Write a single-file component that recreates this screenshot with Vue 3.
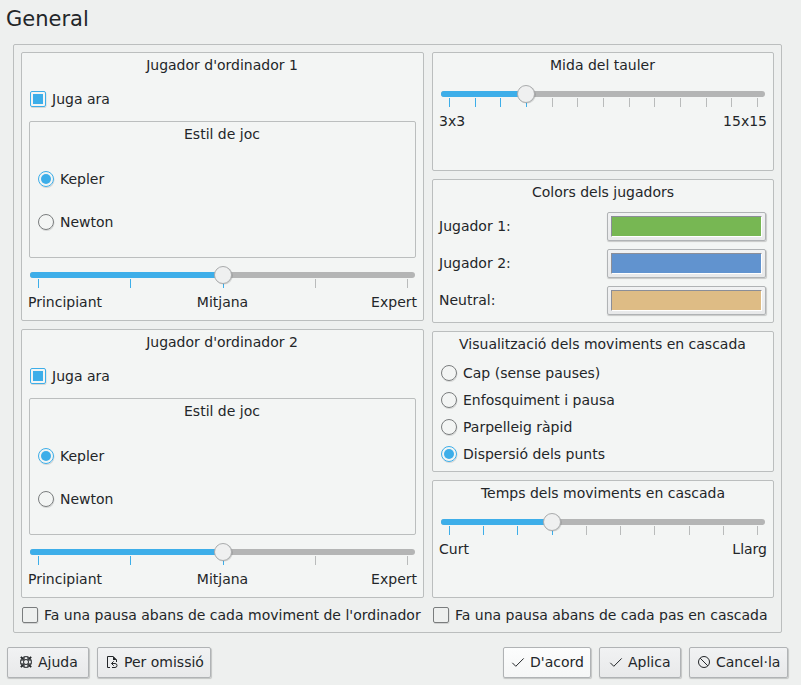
<script setup>
import { ref } from 'vue'

const players = ref([
  { title: "Jugador d'ordinador 1", active: true, style: 'Kepler' },
  { title: "Jugador d'ordinador 2", active: true, style: 'Kepler' },
])

const styles = ['Kepler', 'Newton']

const colors = [
  { label: 'Jugador 1:', tone: 'green' },
  { label: 'Jugador 2:', tone: 'blue' },
  { label: 'Neutral:', tone: 'tan' },
]

const animations = [
  'Cap (sense pauses)',
  'Enfosquiment i pausa',
  'Parpelleig ràpid',
  'Dispersió dels punts',
]
const animation = ref('Dispersió dels punts')

// Builds the tick marks and the handle centre of a slider of the given width.
function slider(width, steps, value) {
  const at = (i) => 8 + Math.round(((width - 16) * i) / steps)
  return {
    width,
    handle: at(value) + 0.5,
    ticks: Array.from({ length: steps + 1 }, (_, i) => ({ x: at(i), on: i <= value })),
  }
}

const level = slider(385, 4, 2)
const boardSize = slider(324, 12, 3)
const speed = slider(324, 9, 3)
</script>

<template>
  <div class="dialog">
    <h1>General</h1>

    <div class="page">
      <div class="columns">
        <div class="column left">
          <section v-for="p in players" :key="p.title" class="group player">
            <div class="title">{{ p.title }}</div>
            <div class="option play">
              <span class="check" :class="{ on: p.active }"></span>
              <span>Juga ara</span>
            </div>
            <div class="group style-box">
              <div class="title">Estil de joc</div>
              <div v-for="s in styles" :key="s" class="option style-option">
                <span class="radio" :class="{ on: p.style === s }"></span>
                <span>{{ s }}</span>
              </div>
            </div>
            <svg class="slider" :width="level.width" height="28">
              <rect class="rail" x="0" y="10" :width="level.width" height="6" rx="3" />
              <rect class="fill" x="0" y="10" :width="level.handle" height="6" rx="3" />
              <rect v-for="t in level.ticks" :key="t.x" class="tick" :class="{ on: t.on }" :x="t.x" y="17" width="1" height="9" />
              <circle class="shade" :cx="level.handle + 0.3" cy="13.6" r="9" />
              <circle class="knob" :cx="level.handle - 0.5" cy="13" r="8.5" />
            </svg>
            <div class="labels three">
              <span>Principiant</span><span>Mitjana</span><span>Expert</span>
            </div>
          </section>
        </div>

        <div class="column right">
          <section class="group board">
            <div class="title">Mida del tauler</div>
            <svg class="slider" :width="boardSize.width" height="28">
              <rect class="rail" x="0" y="10" :width="boardSize.width" height="6" rx="3" />
              <rect class="fill" x="0" y="10" :width="boardSize.handle" height="6" rx="3" />
              <rect v-for="t in boardSize.ticks" :key="t.x" class="tick" :class="{ on: t.on }" :x="t.x" y="17" width="1" height="9" />
              <circle class="shade" :cx="boardSize.handle + 0.3" cy="13.6" r="9" />
              <circle class="knob" :cx="boardSize.handle - 0.5" cy="13" r="8.5" />
            </svg>
            <div class="labels"><span>3x3</span><span>15x15</span></div>
          </section>

          <section class="group palette">
            <div class="title wide">Colors dels jugadors</div>
            <div v-for="c in colors" :key="c.label" class="color-row">
              <span class="color-label">{{ c.label }}</span>
              <button class="color-button"><span class="swatch" :class="c.tone"></span></button>
            </div>
          </section>

          <section class="group animation">
            <div class="title">Visualització dels moviments en cascada</div>
            <div v-for="a in animations" :key="a" class="option cascade">
              <span class="radio" :class="{ on: animation === a }"></span>
              <span>{{ a }}</span>
            </div>
          </section>

          <section class="group speed">
            <div class="title wide">Temps dels moviments en cascada</div>
            <svg class="slider" :width="speed.width" height="28">
              <rect class="rail" x="0" y="10" :width="speed.width" height="6" rx="3" />
              <rect class="fill" x="0" y="10" :width="speed.handle" height="6" rx="3" />
              <rect v-for="t in speed.ticks" :key="t.x" class="tick" :class="{ on: t.on }" :x="t.x" y="17" width="1" height="9" />
              <circle class="shade" :cx="speed.handle + 0.3" cy="13.6" r="9" />
              <circle class="knob" :cx="speed.handle - 0.5" cy="13" r="8.5" />
            </svg>
            <div class="labels"><span>Curt</span><span>Llarg</span></div>
          </section>
        </div>
      </div>

      <div class="pauses">
        <div class="option pause-move">
          <span class="check"></span>
          <span>Fa una pausa abans de cada moviment de l'ordinador</span>
        </div>
        <div class="option pause-step">
          <span class="check"></span>
          <span>Fa una pausa abans de cada pas en cascada</span>
        </div>
      </div>
    </div>

    <footer>
      <button class="push help">
        <svg width="16" height="16" viewBox="0 0 16 16" fill="none" stroke="#232629">
          <circle cx="8" cy="8" r="5.4" />
          <circle cx="8" cy="8" r="2.5" />
          <path d="M6.2 2.500v3.500M9.800 2.500v3.500M6.200 10v3.500M9.800 10v3.500M2.500 6.200h3.500M2.500 9.800h3.500M10 6.200h3.500M10 9.800h3.500" stroke-width="0.8" />
          <path d="M2.800 2.800l2.900 2.900M13.200 2.800l-2.900 2.900M2.800 13.200l2.900-2.900M13.200 13.200l-2.900-2.900" stroke-width="1.7" />
        </svg>
        <span>Ajuda</span>
      </button>
      <button class="push defaults">
        <svg width="16" height="16" viewBox="0 0 16 16" fill="none" stroke="#232629">
          <path d="M6 13.500H3.500V2.500H9L12.500 6V8" />
          <path d="M9 2v4h4z" fill="#232629" stroke="none" />
          <path d="M9.700 7.300L7.500 9.500l2.200 2.200M7.500 9.500H11a2 2 0 0 1 0 4H8" />
        </svg>
        <span>Per omissió</span>
      </button>
      <div class="spacer"></div>
      <button class="push ok">
        <svg width="16" height="16" viewBox="0 0 16 16" fill="none" stroke="#232629">
          <path d="M2.300 8.800L5.800 12.300L13.700 4.400" />
        </svg>
        <span>D'acord</span>
      </button>
      <button class="push apply">
        <svg width="16" height="16" viewBox="0 0 16 16" fill="none" stroke="#232629">
          <path d="M2.300 8.800L5.800 12.300L13.700 4.400" />
        </svg>
        <span>Aplica</span>
      </button>
      <button class="push cancel">
        <svg width="16" height="16" viewBox="0 0 16 16" fill="none" stroke="#232629">
          <circle cx="8" cy="8" r="5.500" />
          <path d="M4.100 4.100l7.800 7.800" />
        </svg>
        <span>Cancel·la</span>
      </button>
    </footer>
  </div>
</template>

<style>
body {
  background: #eff0f1;
}
</style>

<style scoped>
.dialog {
  box-sizing: border-box;
  width: 801px;
  height: 685px;
  background: #eef0ef;
  color: #232629;
  font: 14px/20px "DejaVu Sans", sans-serif;
  white-space: nowrap;
  overflow: hidden;
}

.dialog * {
  box-sizing: border-box;
}

h1 {
  margin: 0;
  height: 44px;
  padding: 4px 0 0 6px;
  font-size: 21px;
  line-height: 30px;
  font-weight: 400;
}

.page {
  width: 769px;
  height: 589px;
  margin-left: 13px;
  padding: 7px;
  border: 1px solid #bbbebe;
  border-radius: 2px;
}

.columns {
  display: flex;
  gap: 8px;
}

.column {
  display: flex;
  flex-direction: column;
  gap: 8px;
}

.left {
  width: 403px;
}

.right {
  width: 342px;
}

.group {
  border: 1px solid #bbbebe;
  border-radius: 2px;
  background: #f3f5f4;
}

.title {
  height: 24px;
  padding-right: 1px;
  line-height: 24px;
  text-align: center;
}

.title.wide {
  padding-right: 0;
}

.player {
  height: 269px;
}

.option {
  display: flex;
  align-items: center;
  gap: 6px;
  height: 20px;
}

.play {
  margin: 12px 0 12px 8px;
}

.style-box {
  height: 137px;
  margin: 0 7px 4px;
}

.style-option {
  margin: 23px 0 0 8px;
}

.check,
.radio {
  flex: none;
  display: flex;
  align-items: center;
  justify-content: center;
  width: 16px;
  height: 16px;
  border: 1px solid #7a7d7e;
  border-radius: 2px;
  box-shadow: 0.5px 1px 0.5px rgba(0, 0, 0, 0.12);
}

.radio {
  border-radius: 50%;
}

.check.on,
.radio.on {
  border-color: #3daee9;
}

.check.on::after,
.radio.on::after {
  content: "";
  width: 10px;
  height: 10px;
  background: #3daee9;
}

.radio.on::after {
  border-radius: 50%;
}

.slider {
  display: block;
  margin-left: 8px;
  overflow: visible;
}

.rail {
  fill: #b4b5b5;
}

.fill {
  fill: #3daee9;
}

.tick {
  fill: #b9bbbb;
}

.tick.on {
  fill: #3daee9;
}

.shade {
  fill: rgba(0, 0, 0, 0.13);
}

.knob {
  fill: #eff0f0;
  stroke: #aaacad;
}

.labels {
  display: flex;
  justify-content: space-between;
  height: 20px;
  margin: 2px 6px 0;
}

.labels.three {
  display: grid;
  grid-template-columns: 1fr auto 1fr;
}

.labels.three span:last-child {
  text-align: right;
}

.board {
  height: 119px;
}

.board .slider {
  margin-top: 4px;
}

.palette {
  height: 144px;
}

.color-row {
  display: flex;
  align-items: center;
  justify-content: space-between;
  height: 29px;
  margin: 8px 7px 0 6px;
}

.color-label {
  padding-bottom: 2px;
}

.color-button,
.push {
  border: 1px solid #b0b3b5;
  border-radius: 2px;
  background: linear-gradient(#f1f2f3, #e8e9ea);
  box-shadow: 0.5px 1px 1px rgba(0, 0, 0, 0.18);
}

.color-button {
  width: 159px;
  height: 29px;
  padding: 3px;
}

.swatch {
  display: block;
  height: 21px;
  border: 1px solid #8b8e98;
  border-right-color: #fff;
  border-bottom-color: #fff;
}

.green {
  background: #77b753;
}

.blue {
  background: #6193cf;
}

.tan {
  background: #debc85;
}

.animation {
  height: 141px;
}

.cascade {
  margin: 7px 0 0 8px;
}

.speed {
  height: 118px;
}

.speed .slider {
  margin-top: 4px;
}

.pauses {
  display: flex;
  margin-top: 7px;
  padding-left: 1px;
}

.pause-move {
  width: 411px;
}

footer {
  display: flex;
  gap: 8px;
  margin: 14px 13px 0 7px;
}

.spacer {
  flex: 1;
}

.push {
  display: flex;
  align-items: center;
  gap: 4px;
  height: 31px;
  padding: 0 0 2px 10px;
  color: inherit;
  font: inherit;
}

.push svg {
  flex: none;
}

.help {
  width: 82px;
}

.defaults {
  width: 114px;
  padding-left: 6px;
}

.ok {
  width: 88px;
  padding-left: 6px;
  background: linear-gradient(#fcfdfd, #f5f6f6);
}

.apply {
  width: 82px;
  padding-left: 8px;
}

.cancel {
  width: 99px;
  padding-left: 6px;
}
</style>
